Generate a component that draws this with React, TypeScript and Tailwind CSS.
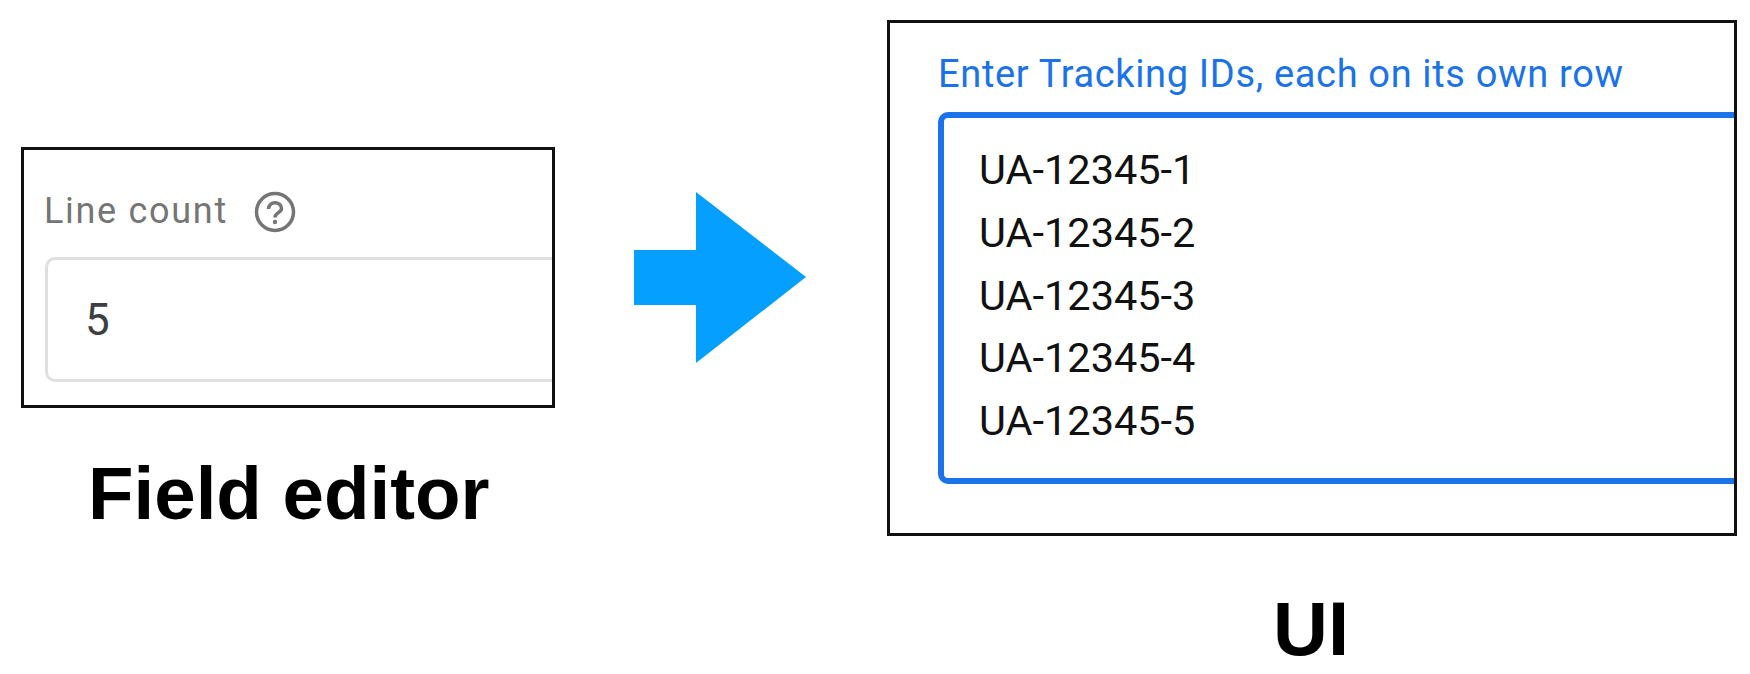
import React from 'react';

const ids = ['UA-12345-1', 'UA-12345-2', 'UA-12345-3', 'UA-12345-4', 'UA-12345-5'];

function HelpIcon() {
  return (
    <svg width="42" height="42" viewBox="0 0 42 42" fill="none" className="ml-[26px] shrink-0">
      <circle cx="21" cy="21" r="18.500" stroke="#757575" strokeWidth="3.500" />
      <path
        d="M14.500 18c0-3.800 3-6.200 6.500-6.200s6.500 2.400 6.500 5.600c0 4.200-6.500 4.400-6.500 9"
        stroke="#757575"
        strokeWidth="3.500"
      />
      <circle cx="21" cy="31" r="2.200" fill="#757575" />
    </svg>
  );
}

function BlueArrow() {
  return (
    <svg width="172" height="171" viewBox="0 0 172 171" className="ml-[79px] mt-[192px] shrink-0">
      <path d="M0 58H62V0L172 85L62 171V113H0Z" fill="#049fff" />
    </svg>
  );
}

export default function App() {
  return (
    <div className="flex items-start w-[1750px] h-[674px] bg-white overflow-hidden font-['Roboto',sans-serif]">
      {/* Field editor side */}
      <div className="ml-[21px] mt-[147px] w-[534px] shrink-0">
        <div className="h-[261px] border-[3px] border-[#111111] overflow-hidden pl-[21px] pt-[41px]">
          <div className="flex items-center h-[42px]">
            <span className="-ml-[1px] -mt-[3px] text-[36px] leading-[42px] tracking-[1.700px] text-[#757575]">Line count</span>
            <HelpIcon />
          </div>
          <div className="mt-[24px] w-[600px] h-[125px] border-[3px] border-[#e0e0e0] rounded-[10px] pl-[37px] flex items-center">
            <span className="text-[44px] leading-none text-[#3c4043]">5</span>
          </div>
        </div>
        <div className="mt-[44px] ml-[67px] text-[74.500px] leading-[84px] font-bold text-black font-['Liberation_Sans',sans-serif]">
          Field editor
        </div>
      </div>

      <BlueArrow />

      {/* UI side */}
      <div className="ml-[81px] mt-[20px] w-[850px] shrink-0">
        <div className="h-[516px] border-[3px] border-[#111111] overflow-hidden pl-[48px] pr-[2px] pt-[28px]">
          <div className="text-[38px] leading-[46px] tracking-[0.660px] text-[#1a73e8] whitespace-nowrap">
            Enter Tracking IDs, each on its own row
          </div>
          <div className="mt-[15px] w-[900px] h-[372px] border-[6px] border-[#1a73e8] rounded-[10px] pl-[35px] pt-[21px]">
            {ids.map((id) => (
              <div key={id} className="text-[41.500px] leading-[62.750px] text-[#111111]">
                {id}
              </div>
            ))}
          </div>
        </div>
        <div className="mt-[51px] text-center text-[76px] leading-[84px] font-bold text-black font-['Liberation_Sans',sans-serif] ml-[-2px]">
          UI
        </div>
      </div>
    </div>
  );
}
